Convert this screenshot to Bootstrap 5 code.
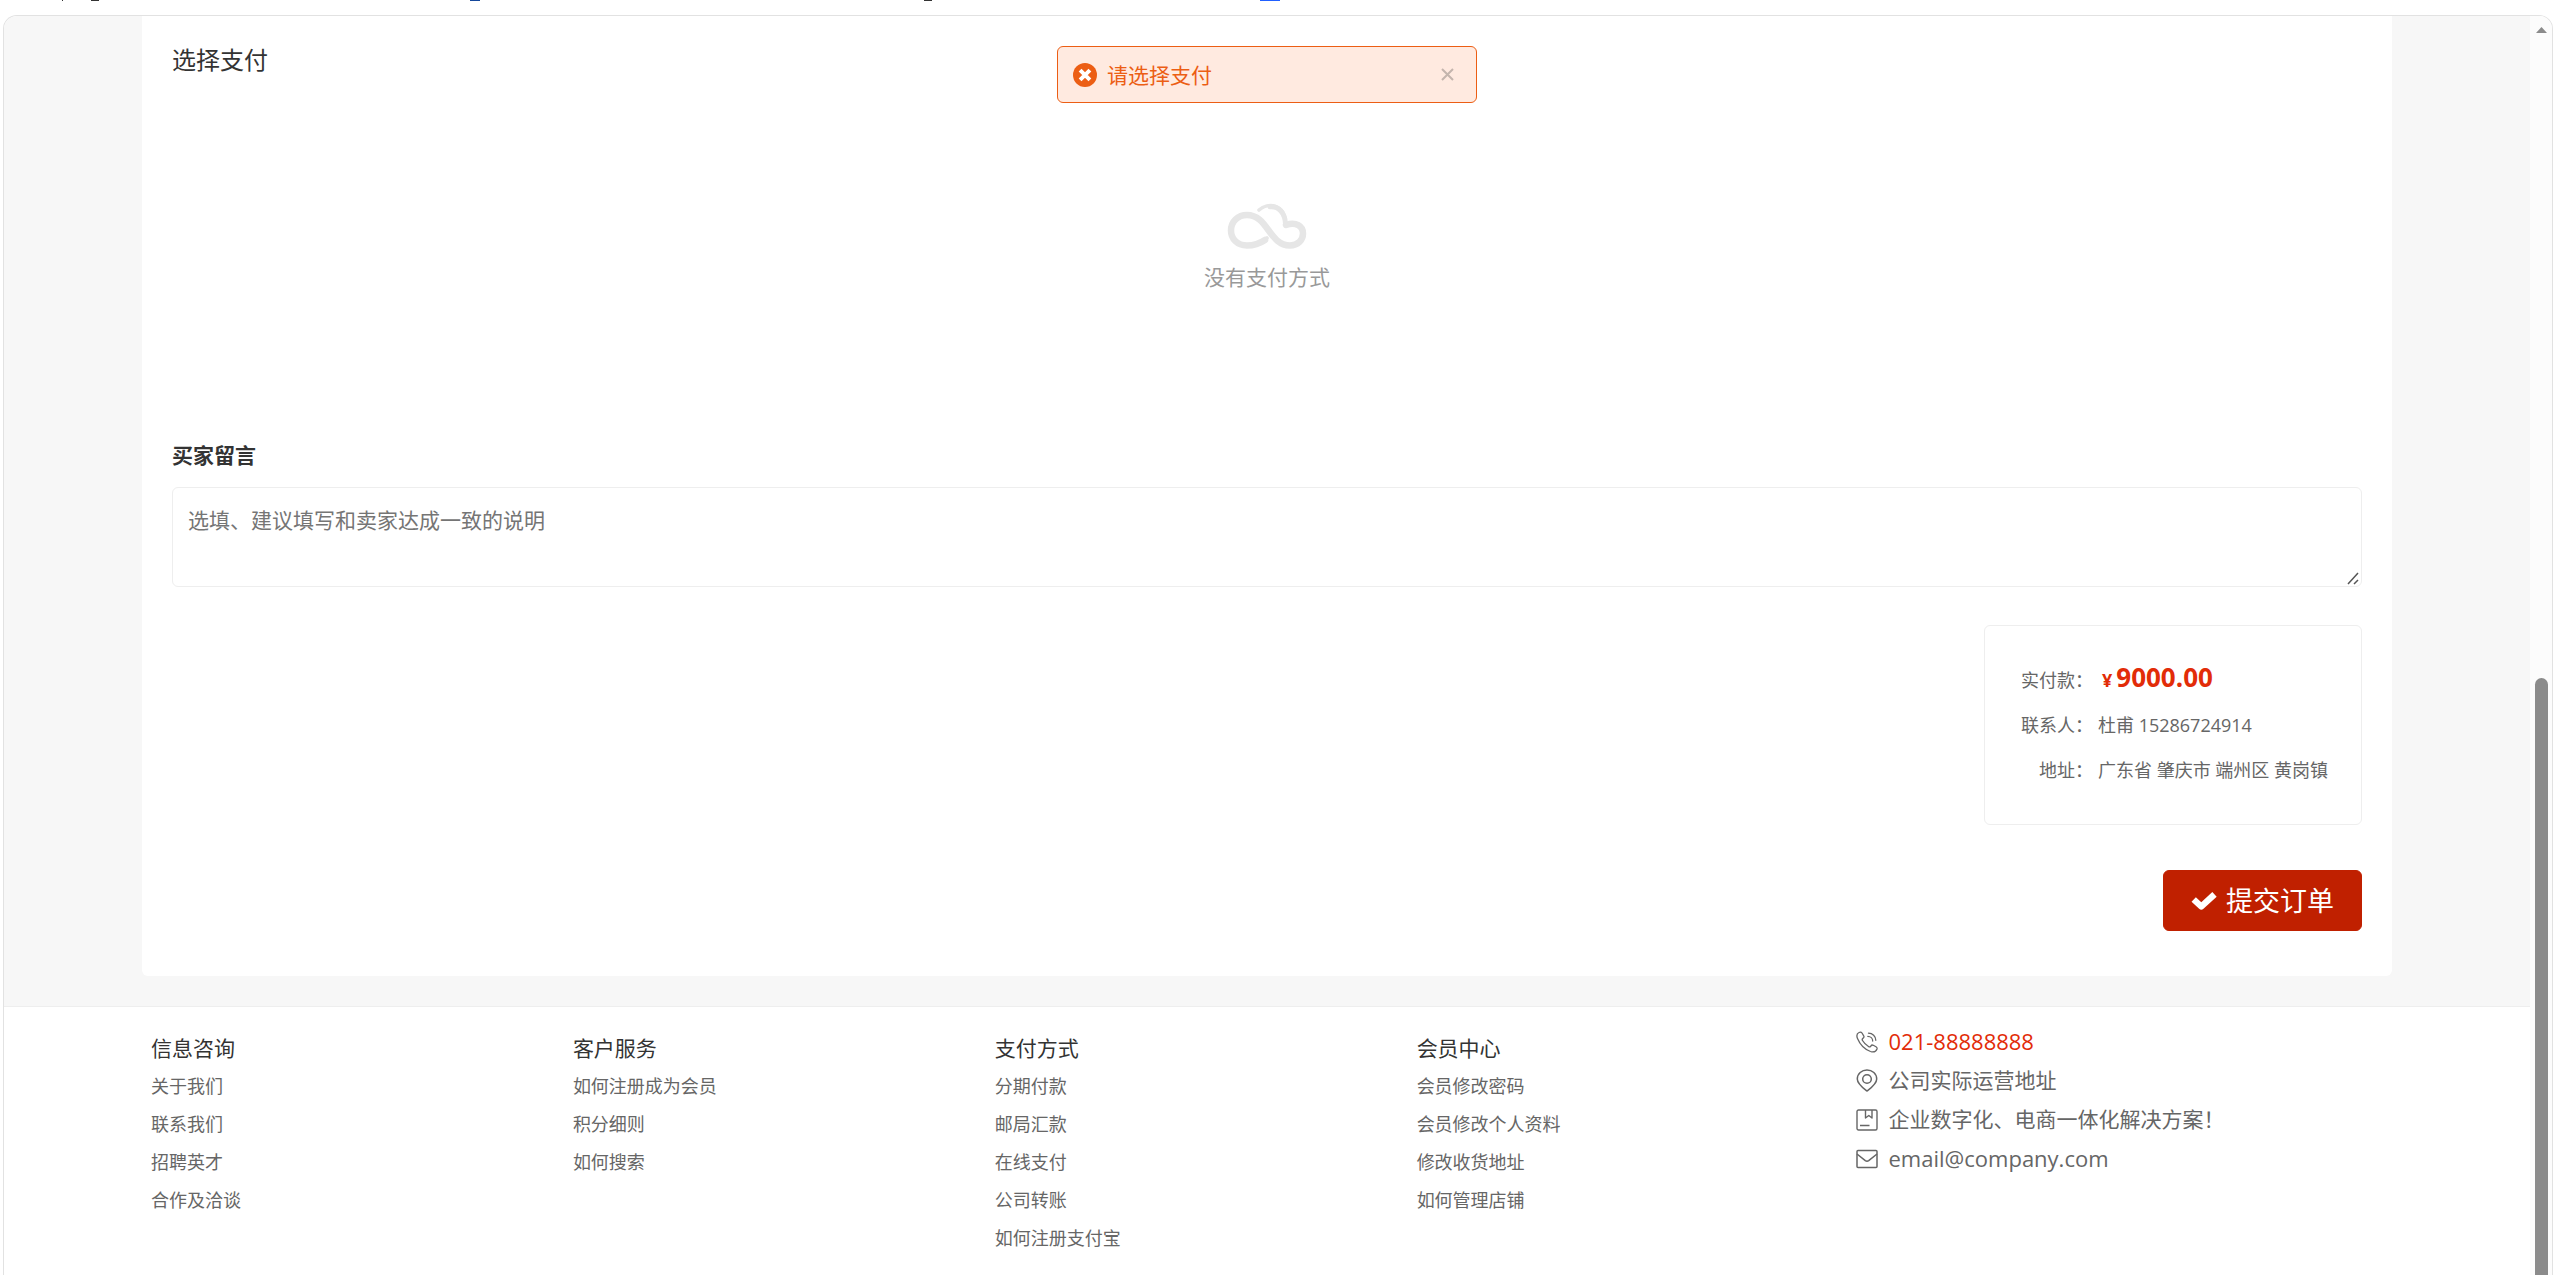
<!DOCTYPE html>
<html lang="zh-CN">
<head>
<meta charset="utf-8">
<meta name="viewport" content="width=device-width, initial-scale=1">
<title>提交订单</title>
<link rel="stylesheet" href="https://cdn.jsdelivr.net/npm/bootstrap@5.3.0/dist/css/bootstrap.min.css">
<style>
  body { font-family: "Open Sans", "Noto Sans CJK SC", sans-serif; font-size: 21px; line-height: 32px; color: #666; background: #fff; }
  a { color: inherit; text-decoration: none; }
  .bookmarks { height: 15px; padding-left: 62px; }
  .bookmarks i { height: 1px; background: #333; }
  .bm-a { width: 1px; } .bm-b { width: 8px; margin-left: 28px; }
  .bookmarks .bm-c { width: 10px; margin-left: 371px; background: #15489b; }
  .bm-d { width: 8px; margin-left: 444px; }
  .bookmarks .bm-e { width: 20px; margin-left: 328px; background: #2160ff; }
  .viewport-frame { margin: 0 5px 0 3px; border: 1px solid #e2e2e2; border-bottom: 0; border-radius: 14px 14px 0 0; min-height: 0; }
  .page-bg { background: #f7f7f7; padding-bottom: 30px; border-bottom: 1px solid #eee; }
  .page-wrap { width: 100%; max-width: 2250px; }
  .pay-panel { background: #fff; border-radius: 0 0 6px 6px; padding: 26px 30px 45px; }
  .pay-title { font-size: 24px; line-height: 36px; font-weight: 400; color: #333; }
  .pay-empty { padding: 125px 0 146px; color: #999; }
  .msg-label { font-weight: 700; color: #333; margin-bottom: 16px; }
  .msg-box { height: 100px; padding: 16px 15px; font-size: 21px; line-height: 32px; border-color: #eee; border-radius: 6px; margin-bottom: 38px; color: #666; }
  .msg-box::placeholder { color: #757575; }
  .msg-box::-webkit-resizer { background: url("data:image/svg+xml,%3Csvg xmlns='http://www.w3.org/2000/svg' width='15' height='15'%3E%3Cpath d='M2 13L12 2M8 13L12 9' stroke='%23555' stroke-width='1.500'/%3E%3C/svg%3E") no-repeat right bottom; }
  .sum-box { border: 1px solid #eee; border-radius: 6px; padding: 32px 33px 31px 36px; font-size: 18px; line-height: 45px; }
  .sum-box .d-flex { height: 45px; }
  .sum-box dt { font-weight: 400; text-align: right; width: 72px; margin-right: 5px; }
  .sum-price { color: #e22c08; font-weight: 700; padding-left: 4px; }
  .sum-price b { font-size: 26px; font-weight: 700; line-height: 1; padding-left: 4px; }
  .btn-order { --bs-btn-color: #fff; --bs-btn-bg: #c02000; --bs-btn-border-color: #c02000; --bs-btn-hover-color: #fff; --bs-btn-hover-bg: #a81c00; --bs-btn-font-size: 27px; --bs-btn-line-height: 39px; --bs-btn-padding-x: 27px; --bs-btn-padding-y: 10px; --bs-btn-border-radius: 6px; margin-top: 45px; gap: 9px; }
  .foot-col { width: 18.75%; padding: 22px 9px; font-size: 18px; line-height: 38px; }
  .foot-col h2 { font-size: 21px; line-height: 38px; font-weight: 400; color: #333; margin: 0; }
  .foot-contact { width: 25%; padding: 14px 0 0 26px; line-height: 38px; }
  .foot-contact li { display: flex; align-items: center; gap: 11px; height: 39px; }
  .foot-contact .latin { font-size: 22px; }
  .foot-contact svg { margin-top: 2px; }
  .tel { color: #e22c08; }
  .scroll-track { width: 22px; background: #fcfcfc; padding: 11px 4px 0 5px; }
  .scroll-thumb { width: 13px; border-radius: 7px 7px 0 0; background: #8b8b8b; margin-top: 645px; }
  .toast-tip { top: 46px; left: calc(50% - 222px); width: 420px; height: 57px; color: #ec5e14; background: #ffeae0; border: 1px solid #ec5e14; border-radius: 6px; padding: 0 22px 0 15px; gap: 10px; }
  .tip-close { line-height: 0; padding-bottom: 3px; }
</style>
<script src="https://cdn.jsdelivr.net/npm/bootstrap@5.3.0/dist/js/bootstrap.bundle.min.js"></script>
</head>
<body class="vh-100 overflow-hidden d-flex flex-column">

<div class="bookmarks d-flex flex-shrink-0" aria-hidden="true"><i class="bm-a"></i><i class="bm-b"></i><i class="bm-c"></i><i class="bm-d"></i><i class="bm-e"></i></div>

<div class="viewport-frame d-flex flex-grow-1 overflow-hidden">
  <div class="flex-grow-1">
    <main class="page-bg">
      <form class="page-wrap pay-panel mx-auto">
        <h1 class="pay-title mb-0">选择支付</h1>
        <div class="pay-empty d-flex flex-column align-items-center">
          <svg width="80" height="46" viewBox="0 1 80 46" fill="none" stroke="#e6e6e6" stroke-linecap="round" stroke-linejoin="round">
            <path stroke-width="6.500" d="M38 38C32 42 26 43.500 20 43.500C10 43.500 4 36.500 4 28.500C4 19.500 11 13 20 13C41 13 42 43.500 63 43.500C71 43.500 76 38 76 31.500C76 24 69 19.500 59 23"/>
            <path stroke-width="3.600" d="M32 8C41 0 58 2 58.500 22M38 38L40 36"/>
            <path stroke-width="5" d="M43 4.800C52 4 58 11 58.500 22"/>
          </svg>
          <span class="mt-2 pt-1">没有支付方式</span>
        </div>
        <label class="msg-label d-block" for="msg">买家留言</label>
        <textarea class="form-control msg-box" id="msg" placeholder="选填、建议填写和卖家达成一致的说明"></textarea>
        <div class="d-flex flex-column align-items-end">
          <div class="sum-box">
            <dl class="mb-0">
              <div class="d-flex"><dt>实付款：</dt><dd class="mb-0 sum-price">¥<b>9000.00</b></dd></div>
              <div class="d-flex"><dt>联系人：</dt><dd class="mb-0">杜甫 15286724914</dd></div>
              <div class="d-flex"><dt>地址：</dt><dd class="mb-0">广东省 肇庆市 端州区 黄岗镇</dd></div>
            </dl>
          </div>
          <button type="button" class="btn btn-order d-flex align-items-center">
            <svg width="26" height="20" viewBox="0 0 26 20" fill="none" stroke="#fff" stroke-width="6.400"><path stroke-linejoin="round" stroke-linecap="butt" d="M2.700 8.500L10.300 15.500L23.500 3.300"/></svg>
            <span>提交订单</span>
          </button>
        </div>
      </form>
    </main>
    <footer class="page-wrap mx-auto d-flex">
      <nav class="foot-col"><h2>信息咨询</h2><ul class="list-unstyled mb-0"><li><a href="#">关于我们</a></li><li><a href="#">联系我们</a></li><li><a href="#">招聘英才</a></li><li><a href="#">合作及洽谈</a></li></ul></nav>
      <nav class="foot-col"><h2>客户服务</h2><ul class="list-unstyled mb-0"><li><a href="#">如何注册成为会员</a></li><li><a href="#">积分细则</a></li><li><a href="#">如何搜索</a></li></ul></nav>
      <nav class="foot-col"><h2>支付方式</h2><ul class="list-unstyled mb-0"><li><a href="#">分期付款</a></li><li><a href="#">邮局汇款</a></li><li><a href="#">在线支付</a></li><li><a href="#">公司转账</a></li><li><a href="#">如何注册支付宝</a></li></ul></nav>
      <nav class="foot-col"><h2>会员中心</h2><ul class="list-unstyled mb-0"><li><a href="#">会员修改密码</a></li><li><a href="#">会员修改个人资料</a></li><li><a href="#">修改收货地址</a></li><li><a href="#">如何管理店铺</a></li></ul></nav>
      <ul class="foot-contact list-unstyled mb-0">
        <li class="tel latin">
          <svg width="22" height="22" viewBox="0 0 22 22" fill="none" stroke="#666" stroke-width="1.300" stroke-linecap="round" stroke-linejoin="round"><path d="M3 1.500C1 2.500 .5 5 1.500 7.500C4 13.500 9 18.500 14.500 20.500C17.500 21.500 20 20.500 21 18C21.300 17 20.800 16.300 20 15.800L17.300 14.300C16.300 13.800 15.500 14 15 14.800C14.300 16 13.500 16.200 12.500 15.500C10 14 8 12 6.500 9.500C5.900 8.500 6.100 7.800 7.100 7.100C8 6.500 8.200 5.700 7.700 4.800L6 2C5.300 1 4.300 .8 3 1.500ZM12.500 2.200C16.500 2.200 19.800 5.300 19.800 9.300M11.800 5.300C14.500 5.300 16.700 7.300 16.700 10"/></svg>
          <span>021-88888888</span></li>
        <li>
          <svg width="22" height="23" viewBox="0 0 22 23" fill="none" stroke="#666" stroke-width="1.500" stroke-linejoin="round"><path d="M11 22C8.500 20 1.300 15 1.300 9.900C1.300 4.800 5.700 1 11 1S20.700 4.800 20.700 9.900C20.700 15 13.500 20 11 22Z"/><circle cx="11" cy="10" r="4.300"/></svg>
          <span>公司实际运营地址</span></li>
        <li>
          <svg width="22" height="22" viewBox="0 0 22 22" fill="none" stroke="#666" stroke-width="1.400" stroke-linejoin="round"><rect x="1" y="1" width="20" height="20" rx="1.500"/><path d="M9.500 1V9L12.800 6.500L16 9V1M4 16.500H13.500"/></svg>
          <span>企业数字化、电商一体化解决方案！</span></li>
        <li class="latin">
          <svg width="22" height="20" viewBox="0 0 22 20" fill="none" stroke="#666" stroke-width="1.500" stroke-linejoin="round"><rect x="1" y="1.500" width="20" height="17" rx="1"/><path d="M1 5L9.300 11.700Q11 13 12.700 11.700L21 5"/></svg>
          <a href="#">email@company.com</a></li>
      </ul>
    </footer>
  </div>
  <div class="scroll-track flex-shrink-0 d-flex flex-column" aria-hidden="true">
    <svg class="flex-shrink-0" width="13" height="6" viewBox="0 0 13 6"><path fill="#8b8b8b" d="M6.500 0L12 6H1Z"/></svg>
    <div class="scroll-thumb flex-grow-1"></div>
  </div>
</div>

<div class="toast-tip position-absolute d-flex align-items-center" role="alert">
  <svg width="24" height="24" viewBox="0 0 23 23"><circle cx="11.500" cy="11.500" r="11.500" fill="#ec5e14"/><path d="M6.800 6.800L16.200 16.200M16.200 6.800L6.800 16.200" stroke="#fff" stroke-width="3.800"/></svg>
  <span class="flex-grow-1">请选择支付</span>
  <button type="button" class="btn p-0 border-0 tip-close" aria-label="关闭"><svg width="13" height="13" viewBox="0 0 13 13"><path d="M1 1L12 12M12 1L1 12" stroke="#c4b5ad" stroke-width="2"/></svg></button>
</div>
</body>
</html>
